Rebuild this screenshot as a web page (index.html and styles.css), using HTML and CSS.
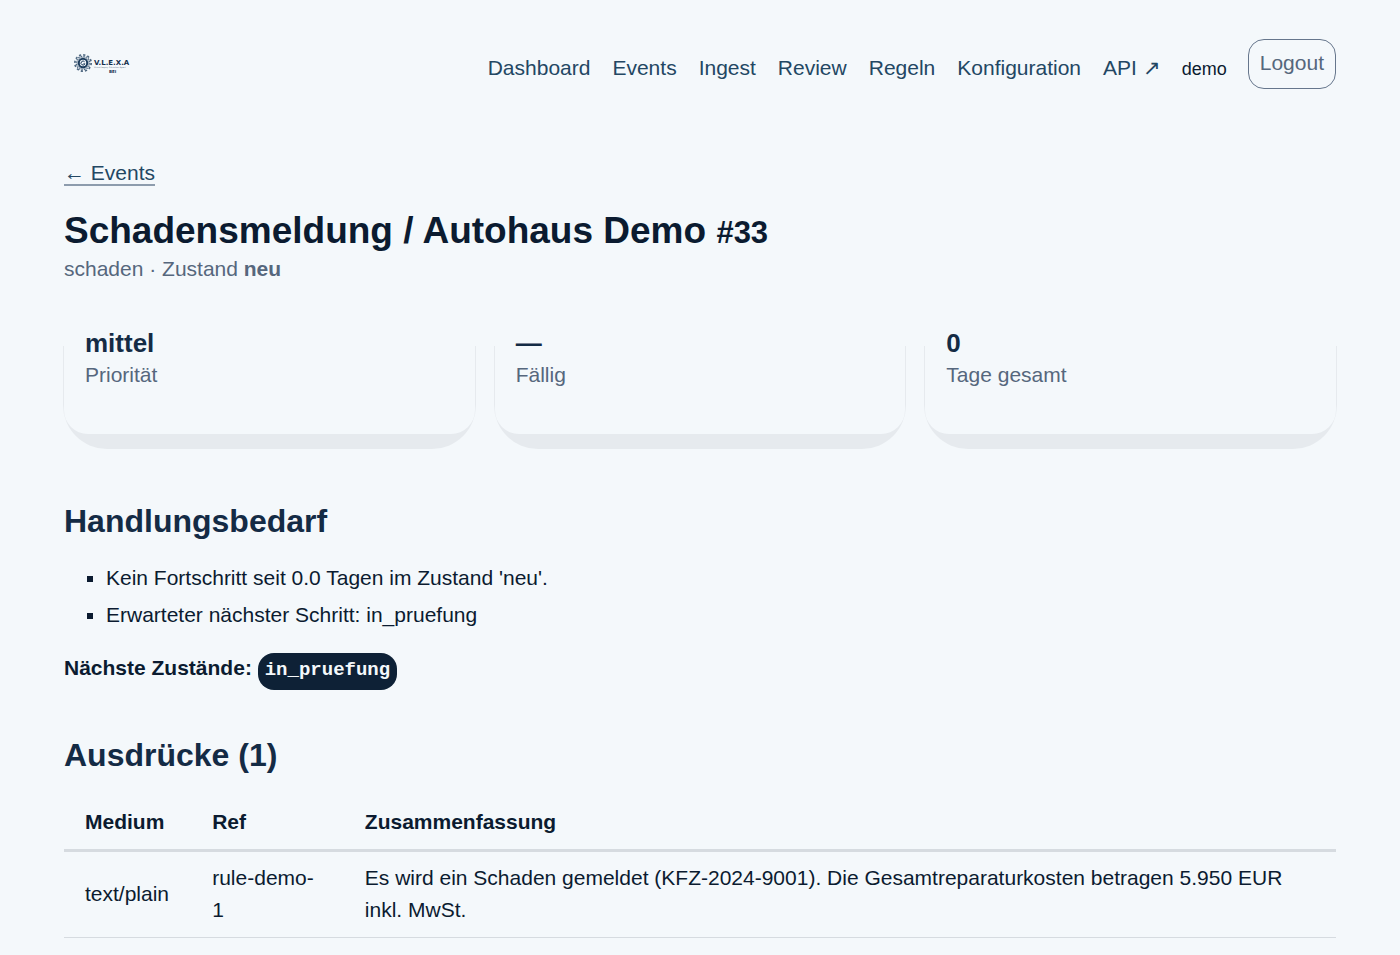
FILE: index.html
```html
<!DOCTYPE html>
<html lang="de">
<head>
<meta charset="utf-8">
<meta name="viewport" content="width=device-width, initial-scale=1">
<title>Schadensmeldung / Autohaus Demo #33</title>
<link rel="stylesheet" href="styles.css">
</head>
<body>
<header class="topbar">
  <a class="brand" href="#" aria-label="V.L.E.X.A">
    <svg class="logo" width="60" height="22" viewBox="0 0 60 22" aria-hidden="true">
      <g fill="none" stroke="#4d6780">
        <circle cx="10" cy="10" r="8.2" stroke-width="1.6" stroke-dasharray="2.2 2.09"/>
        <circle cx="10" cy="10" r="6.8" stroke-width="1.2" stroke-dasharray="1.6 1.07"/>
        <circle cx="10" cy="10" r="5.8" stroke-width="0.8" stroke="#8496a8"/>
        <circle cx="10" cy="10" r="4.2" stroke-width="2" stroke="#1c3c5c"/>
        <path d="M11.6 8.8a2 2 0 1 0 .3 2H10.4" stroke-width="1" stroke="#1c3c5c"/>
      </g>
      <text class="logo-name" x="21" y="12">V.L.E.X.A</text>
      <text class="logo-sub" x="21" y="15">Virtual Legacy Extraction Agent</text>
      <text class="logo-tag" x="36" y="20">BEI</text>
    </svg>
  </a>
  <nav class="menu">
    <div class="menu-links">
      <a class="menu-link" href="#">Dashboard</a>
      <a class="menu-link" href="#">Events</a>
      <a class="menu-link" href="#">Ingest</a>
      <a class="menu-link" href="#">Review</a>
      <a class="menu-link" href="#">Regeln</a>
      <a class="menu-link" href="#">Konfiguration</a>
      <a class="menu-link" href="#">API ↗</a>
    </div>
    <span class="user">demo</span>
    <button class="logout" type="button">Logout</button>
  </nav>
</header>
<main class="page">
  <a class="back" href="#">← Events</a>
  <h1 class="title">Schadensmeldung / Autohaus Demo <span class="title-id">#33</span></h1>
  <p class="subtitle">schaden · Zustand <strong>neu</strong></p>
  <section class="cards">
    <article class="card"><strong class="card-value">mittel</strong><span class="card-label">Priorität</span></article>
    <article class="card"><strong class="card-value">—</strong><span class="card-label">Fällig</span></article>
    <article class="card"><strong class="card-value">0</strong><span class="card-label">Tage gesamt</span></article>
  </section>
  <h2 class="heading">Handlungsbedarf</h2>
  <ul class="todo">
    <li class="todo-item">Kein Fortschritt seit 0.0 Tagen im Zustand 'neu'.</li>
    <li class="todo-item">Erwarteter nächster Schritt: in_pruefung</li>
  </ul>
  <p class="next"><strong>Nächste Zustände:</strong> <code class="state">in_pruefung</code></p>
  <h2 class="heading">Ausdrücke (1)</h2>
  <table class="table">
    <thead>
      <tr><th class="col-medium" scope="col">Medium</th><th class="col-ref" scope="col">Ref</th><th scope="col">Zusammenfassung</th></tr>
    </thead>
    <tbody>
      <tr><td>text/plain</td><td>rule-demo-1</td><td>Es wird ein Schaden gemeldet (KFZ-2024-9001). Die Gesamtreparaturkosten betragen 5.950 EUR inkl. MwSt.</td></tr>
    </tbody>
  </table>
</main>
</body>
</html>
```
FILE: styles.css
```css
* { box-sizing: border-box; }

body {
  margin: 0;
  padding: 0 64px;
  background: #f4f8fb;
  color: #0b1b30;
  font: 21px/32px "Liberation Sans", Arial, sans-serif;
}

.topbar {
  display: flex;
  align-items: center;
  justify-content: space-between;
  height: 128px;
}

.brand { padding-left: 9px; }
.logo { display: block; overflow: visible; }
.logo text { fill: #142f4d; font-family: "DejaVu Sans", sans-serif; }
.logo .logo-name { font-size: 7px; font-weight: bold; }
.logo .logo-sub { font-size: 2px; fill: #5b7085; }
.logo .logo-tag { font-size: 4px; font-weight: bold; }

.menu { display: flex; align-items: center; gap: 21px; }
.menu-links { display: flex; gap: 22px; }
.menu-link { padding-top: 8px; color: #234763; text-decoration: none; }
.user { padding-top: 10px; font-size: 18px; }
.logout {
  height: 50px;
  padding: 0 11px 3px;
  border: 1px solid #66768c;
  border-radius: 16px;
  background: transparent;
  color: #56677d;
  font: inherit;
}

.page { padding: 34px 0 20px; }
.back {
  display: block;
  width: fit-content;
  color: #234763;
  line-height: 22px;
  text-decoration: none;
  border-bottom: 2px solid #8d9cad;
}
.title { margin: 25px 0 0; font-size: 37px; line-height: 40px; }
.title-id { font-size: 31px; }
.subtitle { margin: 0; color: #56677d; }

.cards {
  display: grid;
  grid-template-columns: repeat(3, 1fr);
  gap: 20px;
  margin: 35px 0 65px;
  isolation: isolate;
}
.card {
  position: relative;
  display: flex;
  flex-direction: column;
  min-height: 114px;
  padding: 7px 21px 40px;
  border-radius: 24px;
  background: #f4f8fb;
}
.card::before {
  content: "";
  position: absolute;
  inset: 26px -1px -15px;
  z-index: -1;
  border-radius: 0 0 44px 44px;
  background: #e6eaee;
}
.card-value { color: #142b45; font-size: 26px; line-height: 32px; }
.card-label { color: #56677d; }

.heading { margin: 0 0 19px; color: #142b45; font-size: 32px; line-height: 44px; }
.todo { margin: 0 0 16px; padding-left: 42px; list-style: square; }
.todo-item { margin-bottom: 5px; }
.next { margin: 0 0 43px; line-height: 42px; }
.state {
  display: inline-block;
  padding: 1px 7px 4px;
  border-radius: 16px;
  background: #0e2136;
  color: #f4f8fb;
  font: bold 19px/32px "Liberation Mono", monospace;
}

.table { width: 100%; border-collapse: collapse; table-layout: fixed; text-align: left; }
.table th { padding: 10px 0 11px 21px; border-bottom: 3px solid #d6dbe0; }
.table td { padding: 10px 21px 11px; border-bottom: 1px solid #d6dbe0; }
.table td:first-child { padding-right: 0; }
.table .col-medium { width: 10%; }
.table .col-ref { width: 12%; }
```
